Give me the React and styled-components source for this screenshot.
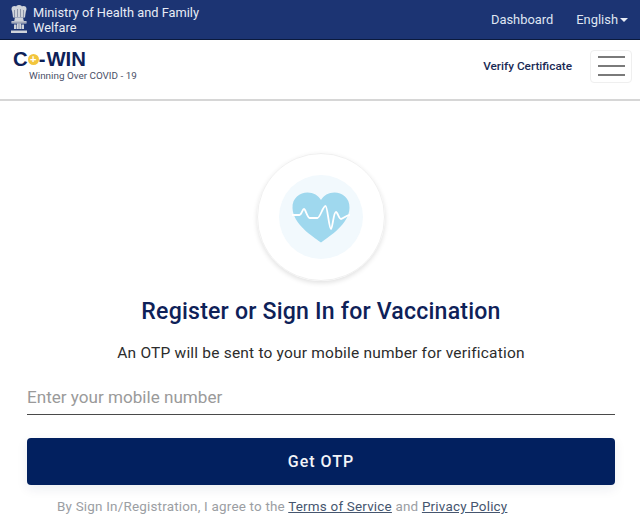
import React from 'react'
import styled, { createGlobalStyle } from 'styled-components'

const GlobalStyle = createGlobalStyle`
  html, body {
    margin: 0;
    padding: 0;
    background: #fff;
    font-family: Roboto, 'Liberation Sans', sans-serif;
  }
`

const Page = styled.div`
  width: 640px;
  height: 532px;
  overflow: hidden;
  background: #fff;
`

const TopBar = styled.header`
  height: 40px;
  box-sizing: border-box;
  background: #1c3473;
  border-bottom: 1px solid #0b1a3d;
  display: flex;
  align-items: center;
  justify-content: space-between;
  padding: 0 12px 0 10px;
`

const Ministry = styled.div`
  display: flex;
  align-items: center;
  gap: 5px;
`

const MinistryName = styled.div`
  width: 185px;
  padding-top: 1px;
  color: #e8ecf5;
  font-size: 12.8px;
  line-height: 15px;
`

const TopLinks = styled.nav`
  display: flex;
  align-items: center;
  gap: 23px;
  color: #dfe5f2;
  font-size: 12.9px;
`

const Language = styled.span`
  display: flex;
  align-items: center;
  gap: 2px;
`

const Caret = styled.i`
  width: 0;
  height: 0;
  border-left: 4px solid transparent;
  border-right: 4px solid transparent;
  border-top: 4px solid #e8ecf5;
`

const NavBar = styled.div`
  height: 61px;
  box-sizing: border-box;
  border-bottom: 2px solid #d6d6d6;
  display: flex;
  align-items: center;
  justify-content: space-between;
  padding: 0 8px 7px 13px;
`

const Logo = styled.div`
  display: flex;
  flex-direction: column;
  gap: 1px;
  padding-bottom: 2px;
`

const LogoWord = styled.div`
  display: flex;
  align-items: center;
  color: #0e2158;
  font-family: 'Liberation Sans', sans-serif;
  font-size: 20.3px;
  font-weight: 700;
  line-height: 20px;
`

const LogoPlus = styled.span`
  width: 11px;
  height: 11px;
  margin: 2px 0 0 0;
  border-radius: 50%;
  background: #f2c53d;
  color: #fff;
  font-size: 11px;
  line-height: 11px;
  text-align: center;
`

const LogoDash = styled.span`
  margin-right: 1px;
`

const LogoTagline = styled.div`
  margin-left: 16px;
  color: #4a5068;
  font-size: 9.9px;
  line-height: 12px;
`

const NavRight = styled.div`
  display: flex;
  align-items: center;
  gap: 18px;
`

const Verify = styled.a`
  color: #1a2a55;
  font-size: 11.8px;
  font-weight: 500;
`

const Burger = styled.button`
  width: 42px;
  height: 33px;
  padding: 0;
  background: #fff;
  border: 1px solid #efefef;
  border-radius: 4px;
  display: flex;
  flex-direction: column;
  align-items: center;
  justify-content: center;
  gap: 7px;
`

const BurgerLine = styled.span`
  width: 27px;
  height: 2px;
  background: #7a7a7a;
`

const Main = styled.main`
  display: flex;
  flex-direction: column;
  align-items: center;
  padding: 52px 25px 0 27px;
`

const Badge = styled.div`
  width: 128px;
  height: 128px;
  box-sizing: border-box;
  border-radius: 50%;
  border: 1px solid #f0f0f0;
  box-shadow: 0 2px 5px rgba(0, 0, 0, 0.12);
  display: flex;
  align-items: center;
  justify-content: center;
`

const BadgeInner = styled.div`
  width: 84px;
  height: 84px;
  border-radius: 50%;
  background: #f2f9fd;
  display: flex;
  align-items: center;
  justify-content: center;
`

const Title = styled.h1`
  margin: 17px 0 0;
  color: #0e2158;
  font-size: 23.1px;
  line-height: 28px;
  font-weight: 500;
  letter-spacing: 0.2px;
`

const Subtitle = styled.p`
  margin: 17px 0 0;
  color: #2c2c2c;
  font-size: 15.5px;
  line-height: 20px;
  letter-spacing: 0.2px;
`

const MobileField = styled.div`
  align-self: stretch;
  margin-top: 20px;
  height: 32px;
  box-sizing: border-box;
  border-bottom: 1px solid #4a4a4a;
  color: #9a9a9a;
  font-size: 17.1px;
  line-height: 28px;
`

const OtpButton = styled.button`
  align-self: stretch;
  margin-top: 23px;
  height: 47px;
  padding-bottom: 2px;
  border: 0;
  border-radius: 4px;
  background: #02205f;
  color: #f2f4f8;
  font-family: inherit;
  font-size: 16px;
  font-weight: 500;
  letter-spacing: 1px;
  box-shadow: 0 4px 12px rgba(2, 32, 95, 0.08);
`

const Terms = styled.p`
  align-self: flex-start;
  margin: 13px 0 0 30px;
  color: #9b9ea3;
  font-size: 13.45px;
  line-height: 18px;
  letter-spacing: 0.2px;
  white-space: nowrap;
`

const TermsLink = styled.a`
  color: #46566f;
  text-decoration: underline;
`

const Emblem = () => (
  <svg width="18" height="29" viewBox="0 0 18 29">
    <g fill="#cfd3da">
      <circle cx="4.500" cy="4" r="3" />
      <circle cx="9" cy="3.200" r="3.200" />
      <circle cx="13.500" cy="4" r="3" />
      <path d="M2 5h14l-1 7.500H3z" />
      <path d="M5 12.500h8l.8 3.500H4.200z" />
      <path d="M1.500 16h15v2.500h-15z" />
      <path d="M7 18.500h4V24H7z" />
      <path d="M4 19.500h2.500V24H4zM11.500 19.500H14V24h-2.500z" />
      <path d="M1 25.500h16V28H1z" />
    </g>
    <path d="M4.500 5v7M7.500 4v8M10.500 4v8M13.500 5v7M2 17.200h14M9 19v5" stroke="#6f7a94" strokeWidth="0.700" />
  </svg>
)

const HeartPulse = () => (
  <svg width="58" height="51" viewBox="0 0 58 51">
    <path
      d="M29 50.500C20 44 1 32 .500 16C0 6 8 .500 15.500 .500C21.500 .500 26.500 3.500 29 8C31.500 3.500 36.500 .500 42.500 .500C50 .500 58 6 57.500 16C57 32 38 44 29 50.500Z"
      fill="#9fd8ee"
    />
    <path
      d="M0 23H7.500C9.500 23 10.500 17 12 17C13.500 17 15 25 17.500 26H25.500C28 26 31 14 33.500 14C35.500 14 37 37 39 37C40.500 37 41.500 20 44 20C45.500 20 47 27 49 27C51.500 27 54 23 58 23"
      fill="none"
      stroke="#fff"
      strokeWidth="1.800"
      strokeLinejoin="round"
    />
  </svg>
)

export default function App() {
  return (
    <Page>
      <GlobalStyle />
      <TopBar>
        <Ministry>
          <Emblem />
          <MinistryName>Ministry of Health and Family Welfare</MinistryName>
        </Ministry>
        <TopLinks>
          <span>Dashboard</span>
          <Language>English<Caret /></Language>
        </TopLinks>
      </TopBar>
      <NavBar>
        <Logo>
          <LogoWord>C<LogoPlus>+</LogoPlus><LogoDash>-</LogoDash>WIN</LogoWord>
          <LogoTagline>Winning Over COVID - 19</LogoTagline>
        </Logo>
        <NavRight>
          <Verify>Verify Certificate</Verify>
          <Burger aria-label="Menu">
            <BurgerLine />
            <BurgerLine />
            <BurgerLine />
          </Burger>
        </NavRight>
      </NavBar>
      <Main>
        <Badge>
          <BadgeInner>
            <HeartPulse />
          </BadgeInner>
        </Badge>
        <Title>Register or Sign In for Vaccination</Title>
        <Subtitle>An OTP will be sent to your mobile number for verification</Subtitle>
        <MobileField>Enter your mobile number</MobileField>
        <OtpButton>Get OTP</OtpButton>
        <Terms>
          By Sign In/Registration, I agree to the <TermsLink>Terms of Service</TermsLink> and <TermsLink>Privacy Policy</TermsLink>
        </Terms>
      </Main>
    </Page>
  )
}
